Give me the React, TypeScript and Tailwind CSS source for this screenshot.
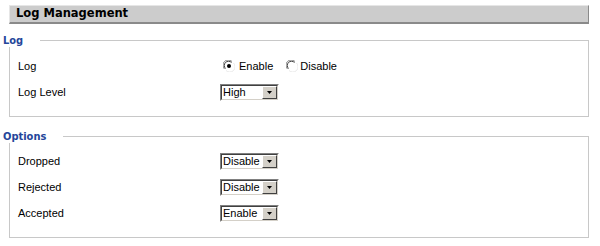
import React from 'react';

const labelFont = { fontFamily: '"Liberation Sans", Arial, sans-serif' };

function Radio({ checked }: { checked?: boolean }) {
  return (
    <svg width="12" height="12" viewBox="0 0 12 12" className="shrink-0">
      <circle cx="6" cy="6" r="5.5" fill="#ffffff" />
      <path d="M1.5 9 A5 5 0 0 1 9 1.5" fill="none" stroke="#808080" strokeWidth="1" />
      <path d="M2.5 8.5 A4 4 0 0 1 8.5 2.5" fill="none" stroke="#404040" strokeWidth="1" />
      <path d="M10.5 3 A5 5 0 0 1 3 10.5" fill="none" stroke="#e8e8e8" strokeWidth="1" />
      {checked && <circle cx="6" cy="6" r="2" fill="#000000" />}
    </svg>
  );
}

function Select({ value }: { value: string }) {
  return (
    <div className="flex h-[17px] w-[59px] border border-t-[#808080] border-l-[#808080] border-b-[#ffffff] border-r-[#ffffff]">
      <div className="flex flex-1 border border-t-[#404040] border-l-[#404040] border-b-[#d4d0c8] border-r-[#d4d0c8] bg-white">
        <span className="flex-1 pl-[1px] text-[11px] leading-[13px] text-black" style={labelFont}>
          {value}
        </span>
        <div className="flex w-[15px] items-center justify-center border border-t-[#ffffff] border-l-[#ffffff] border-b-[#404040] border-r-[#404040] bg-[#d4d0c8]">
          <svg width="5" height="3" viewBox="0 0 5 3">
            <path d="M0 0 H5 L2.5 3 Z" fill="#000000" />
          </svg>
        </div>
      </div>
    </div>
  );
}

function Row({ label, children }: { label: string; children: React.ReactNode }) {
  return (
    <div className="flex h-[26px] items-center">
      <span className="w-[202px] text-[11px] text-black" style={labelFont}>
        {label}
      </span>
      {children}
    </div>
  );
}

function Section({
  title,
  titleWidth,
  top,
  children,
}: {
  title: string;
  titleWidth: string;
  top: string;
  children: React.ReactNode;
}) {
  return (
    <div className={`${top} ml-[3px] mr-[11px]`}>
      <div className="flex h-[12px]">
        <span
          className={`${titleWidth} text-[11px] font-bold leading-[12px] text-[#25469a]`}
          style={{ fontFamily: '"DejaVu Sans Condensed", "DejaVu Sans", Verdana, sans-serif' }}
        >
          {title}
        </span>
        <div className="mt-[5px] flex-1 border-t border-r border-[#c8c8c8]" />
      </div>
      <div className="ml-[6px] border-b border-l border-r border-[#c8c8c8] pt-[6px] pb-[11px] pl-[8px]">
        {children}
      </div>
    </div>
  );
}

export default function App() {
  return (
    <div className="h-[246px] w-[600px] overflow-hidden bg-white pt-[5px]">
      <div className="ml-[9px] mr-[11px] flex h-[19px] items-center border-t border-l border-r border-b-2 border-t-[#e6e6e6] border-l-[#e6e6e6] border-r-[#8a8a8a] border-b-[#8a8a8a] bg-[#cccccc] pl-[6px]">
        <span
          className="text-[11.5px] font-bold text-black"
          style={{ fontFamily: '"DejaVu Sans", Verdana, sans-serif' }}
        >
          Log Management
        </span>
      </div>

      <Section title="Log" titleWidth="w-[37px]" top="mt-[11px]">
        <Row label="Log">
          <div className="flex items-center text-[11px] text-black" style={labelFont}>
            <span className="ml-[3px]">
              <Radio checked />
            </span>
            <span className="ml-[4px]">Enable</span>
            <span className="ml-[13px]">
              <Radio />
            </span>
            <span className="ml-[2px]">Disable</span>
          </div>
        </Row>
        <Row label="Log Level">
          <Select value="High" />
        </Row>
      </Section>

      <Section title="Options" titleWidth="w-[60px]" top="mt-[14px]">
        <div className="-mt-[1px]">
          <Row label="Dropped">
            <Select value="Disable" />
          </Row>
          <Row label="Rejected">
            <Select value="Disable" />
          </Row>
          <Row label="Accepted">
            <Select value="Enable" />
          </Row>
        </div>
      </Section>
    </div>
  );
}
